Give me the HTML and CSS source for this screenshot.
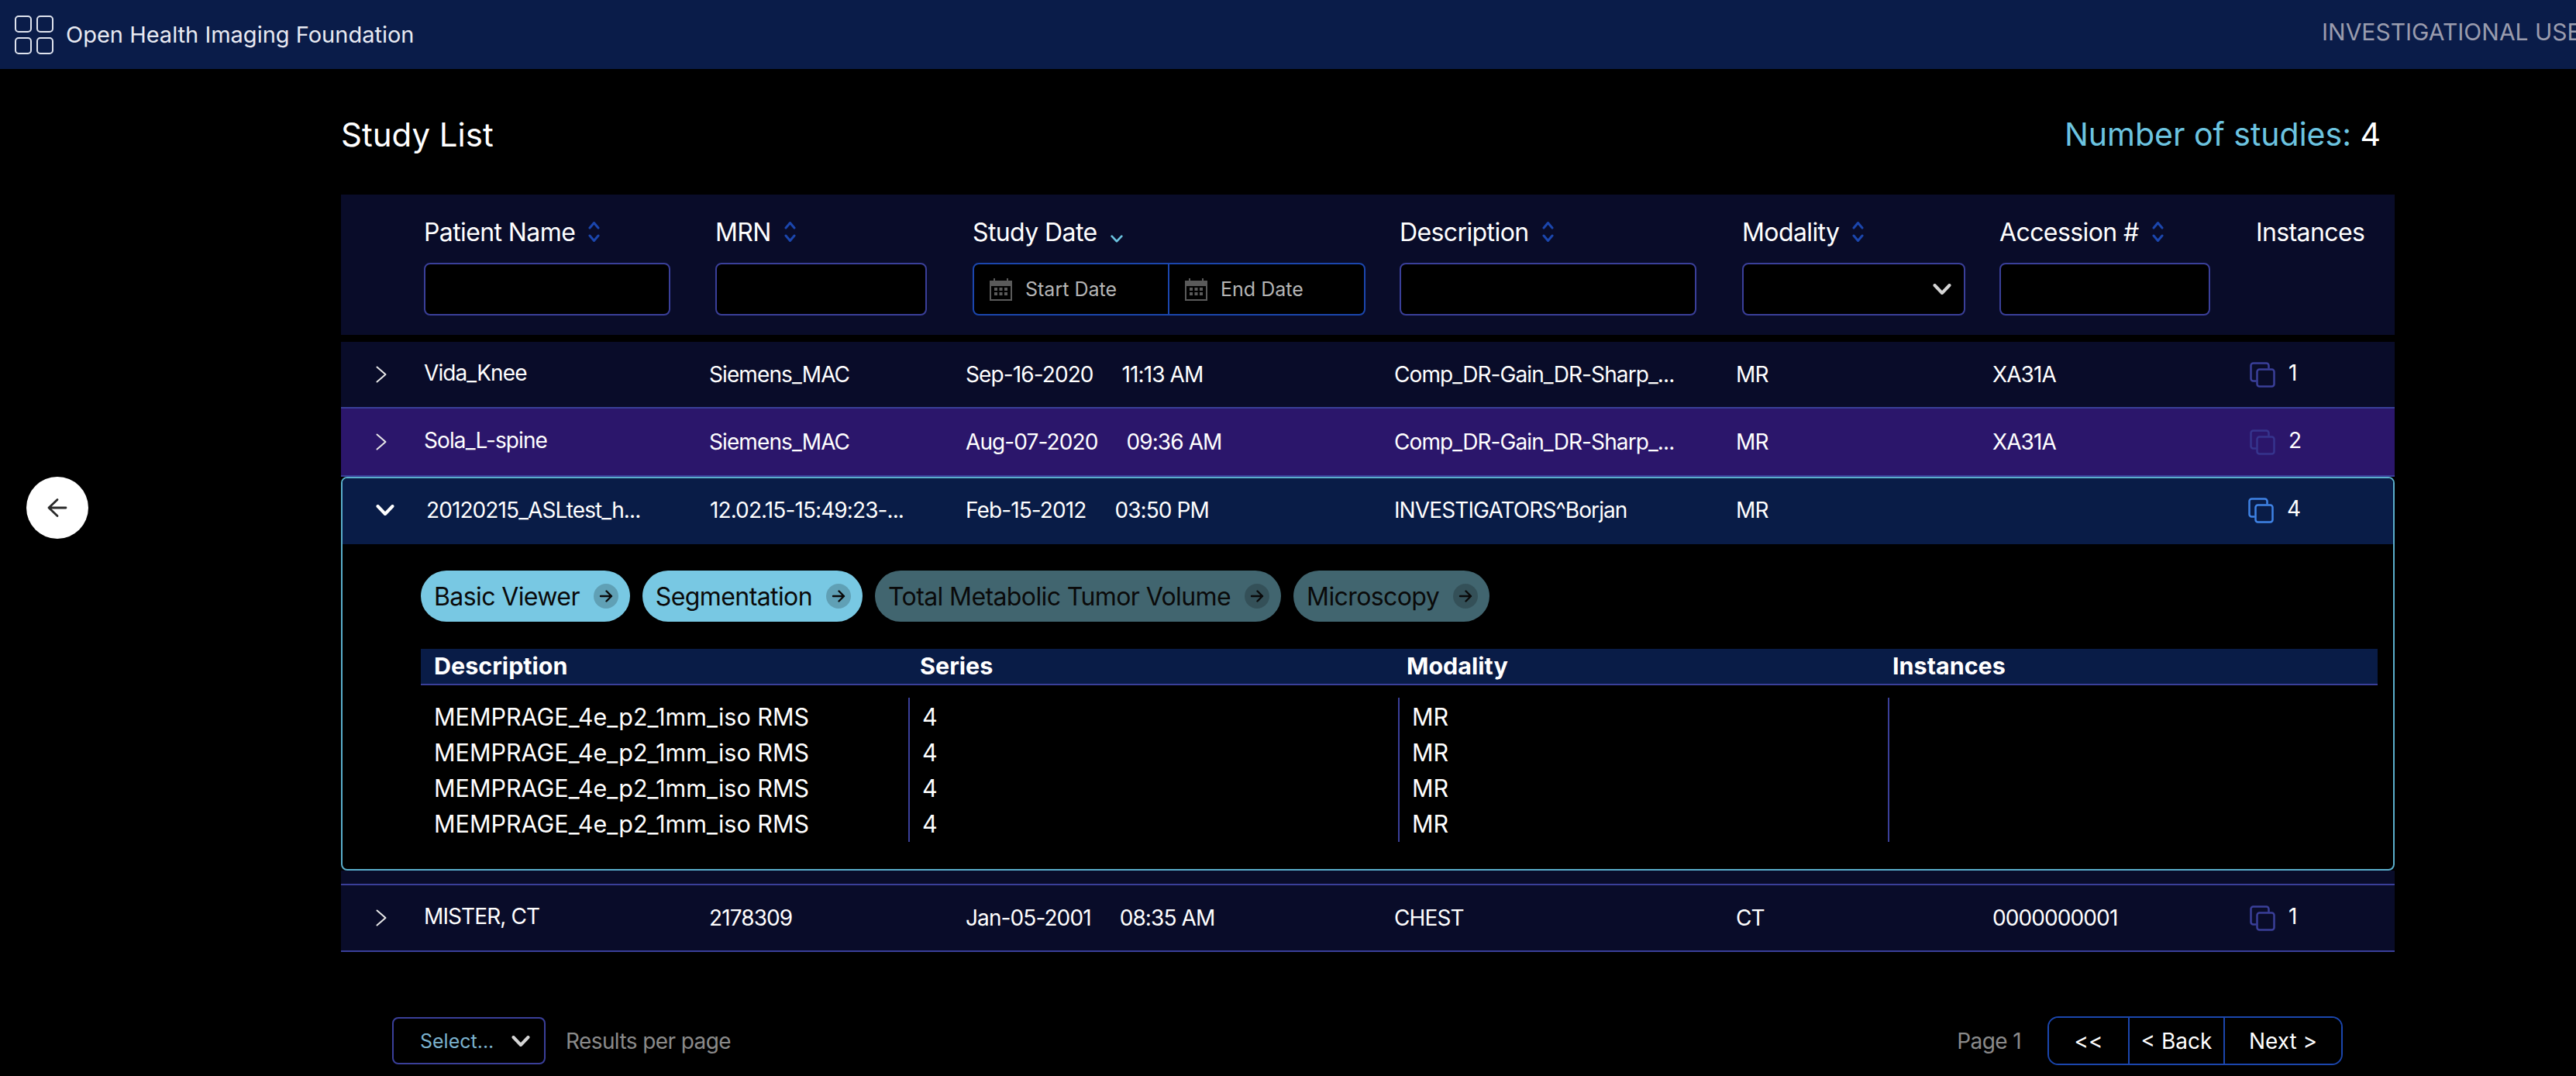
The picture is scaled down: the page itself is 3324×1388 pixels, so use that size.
FILE: index.html
```html
<!DOCTYPE html>
<html lang="en">
<head>
  <meta charset="UTF-8" />
  <title>Study List</title>
  <link rel="stylesheet" href="styles.css">
</head>
<body>
  <svg width="0" height="0" class="defs">
    <defs>
      <symbol id="sort" viewBox="0 0 15 28"><path d="M2 9l5.500-6.500L13 9M2 19l5.500 6.500L13 19" fill="none" stroke="currentColor" stroke-width="3" stroke-linecap="round" stroke-linejoin="round"/></symbol>
      <symbol id="copies" viewBox="0 0 33 33"><path d="M8.500 24.500h-4a3 3 0 0 1-3-3v-17a3 3 0 0 1 3-3h17a3 3 0 0 1 3 3v4" fill="none" stroke="currentColor" stroke-width="2.500"/><rect x="9.500" y="9.500" width="22" height="22" rx="3" fill="none" stroke="currentColor" stroke-width="2.500"/></symbol>
      <symbol id="cal" viewBox="0 0 29 29"><path d="M0 3h5V0h2v3h15V0h2v3h5v26H0z M2 10v17h25V10z" fill="currentColor" fill-rule="evenodd"/><path d="M6 12h4v4H6zM12.500 12h4v4h-4zM19 12h4v4h-4zM6 18h4v4H6zM12.500 18h4v4h-4zM19 18h4v4h-4z" fill="currentColor"/></symbol>
      <symbol id="down" viewBox="0 0 24 14"><path d="M2.500 2L12 12l9.500-10" fill="none" stroke="currentColor" stroke-width="4" stroke-linecap="round" stroke-linejoin="round"/></symbol>
      <symbol id="right" viewBox="0 0 14 22"><path d="M1.500 1.500L12.500 11 1.500 20.500" fill="none" stroke="currentColor" stroke-width="2" stroke-linecap="round" stroke-linejoin="round"/></symbol>
      <symbol id="arrow" viewBox="0 0 28 28"><path d="M3 14h22M14 3.500L3 14l11 10.500" fill="none" stroke="currentColor" stroke-width="2.800" stroke-linecap="round" stroke-linejoin="round"/></symbol>
      <symbol id="go" viewBox="0 0 20 20"><path d="M3 10h14M10.500 3.500L17 10l-6.500 6.500" fill="none" stroke="currentColor" stroke-width="2.400" stroke-linecap="round" stroke-linejoin="round"/></symbol>
    </defs>
  </svg>

  <header class="topbar">
    <div class="brand">
      <svg class="logo" viewBox="0 0 50 50"><g fill="none" stroke="#dfe3ee" stroke-width="2"><rect x="1" y="1" width="20" height="20" rx="4"/><rect x="29" y="1" width="20" height="20" rx="4"/><rect x="1" y="29" width="20" height="20" rx="4"/><rect x="29" y="29" width="20" height="20" rx="4"/></g></svg>
      <span>Open Health Imaging Foundation</span>
    </div>
    <div class="notice">INVESTIGATIONAL USE ONLY</div>
  </header>

  <button class="back-btn"><svg class="back-icon"><use href="#arrow"/></svg></button>

  <main class="content">
    <div class="title-row">
      <h1>Study List</h1>
      <div class="count"><span class="count-label">Number of studies:</span> 4</div>
    </div>

    <div class="filters">
      <div class="filter">
        <div class="filter-label">Patient Name <svg class="sort"><use href="#sort"/></svg></div>
        <div class="field w-patient"></div>
      </div>
      <div class="filter">
        <div class="filter-label">MRN <svg class="sort"><use href="#sort"/></svg></div>
        <div class="field w-mrn"></div>
      </div>
      <div class="filter">
        <div class="filter-label">Study Date <svg class="sort-active"><use href="#down"/></svg></div>
        <div class="field date-range">
          <div class="date-part start"><svg class="cal"><use href="#cal"/></svg>Start Date</div>
          <div class="date-part"><svg class="cal"><use href="#cal"/></svg>End Date</div>
        </div>
      </div>
      <div class="filter">
        <div class="filter-label">Description <svg class="sort"><use href="#sort"/></svg></div>
        <div class="field w-desc"></div>
      </div>
      <div class="filter">
        <div class="filter-label">Modality <svg class="sort"><use href="#sort"/></svg></div>
        <div class="field w-modality select-field"><svg class="select-arrow"><use href="#down"/></svg></div>
      </div>
      <div class="filter">
        <div class="filter-label">Accession # <svg class="sort"><use href="#sort"/></svg></div>
        <div class="field w-accession"></div>
      </div>
      <div class="filter">
        <div class="filter-label">Instances</div>
      </div>
    </div>

    <div class="study-row">
      <svg class="row-arrow"><use href="#right"/></svg>
      <div class="raised">Vida_Knee</div>
      <div>Siemens_MAC</div>
      <div><span class="date">Sep-16-2020</span>11:13 AM</div>
      <div>Comp_DR-Gain_DR-Sharp_...</div>
      <div>MR</div>
      <div>XA31A</div>
      <div class="instances raised"><svg class="copies"><use href="#copies"/></svg>1</div>
    </div>

    <div class="study-row hovered">
      <svg class="row-arrow"><use href="#right"/></svg>
      <div class="raised">Sola_L-spine</div>
      <div>Siemens_MAC</div>
      <div><span class="date">Aug-07-2020</span>09:36 AM</div>
      <div>Comp_DR-Gain_DR-Sharp_...</div>
      <div>MR</div>
      <div>XA31A</div>
      <div class="instances raised"><svg class="copies"><use href="#copies"/></svg>2</div>
    </div>

    <div class="study-open">
      <div class="study-row open-head">
        <svg class="row-arrow-open"><use href="#down"/></svg>
        <div>20120215_ASLtest_h...</div>
        <div>12.02.15-15:49:23-...</div>
        <div><span class="date">Feb-15-2012</span>03:50 PM</div>
        <div>INVESTIGATORS^Borjan</div>
        <div>MR</div>
        <div></div>
        <div class="instances raised"><svg class="copies"><use href="#copies"/></svg>4</div>
      </div>

      <div class="modes">
        <button class="mode">Basic Viewer <span class="mode-go"><svg><use href="#go"/></svg></span></button>
        <button class="mode">Segmentation <span class="mode-go"><svg><use href="#go"/></svg></span></button>
        <button class="mode off">Total Metabolic Tumor Volume <span class="mode-go"><svg><use href="#go"/></svg></span></button>
        <button class="mode off">Microscopy <span class="mode-go"><svg><use href="#go"/></svg></span></button>
      </div>

      <div class="series">
        <div class="series-head">
          <div>Description</div>
          <div>Series</div>
          <div>Modality</div>
          <div>Instances</div>
        </div>
        <div class="series-body">
          <div class="series-col">
            <div>MEMPRAGE_4e_p2_1mm_iso RMS</div>
            <div>MEMPRAGE_4e_p2_1mm_iso RMS</div>
            <div>MEMPRAGE_4e_p2_1mm_iso RMS</div>
            <div>MEMPRAGE_4e_p2_1mm_iso RMS</div>
          </div>
          <div class="series-col ruled">
            <div>4</div>
            <div>4</div>
            <div>4</div>
            <div>4</div>
          </div>
          <div class="series-col ruled">
            <div>MR</div>
            <div>MR</div>
            <div>MR</div>
            <div>MR</div>
          </div>
          <div class="series-col ruled"></div>
        </div>
      </div>
    </div>

    <div class="open-gap"></div>

    <div class="study-row">
      <svg class="row-arrow"><use href="#right"/></svg>
      <div class="raised">MISTER, CT</div>
      <div>2178309</div>
      <div><span class="date">Jan-05-2001</span>08:35 AM</div>
      <div>CHEST</div>
      <div>CT</div>
      <div>0000000001</div>
      <div class="instances raised"><svg class="copies"><use href="#copies"/></svg>1</div>
    </div>

    <footer class="pager">
      <div class="pager-left">
        <div class="page-size">Select... <svg class="select-arrow"><use href="#down"/></svg></div>
        <span class="muted">Results per page</span>
      </div>
      <div class="pager-right">
        <span class="muted">Page 1</span>
        <div class="page-btns">
          <button class="first">&lt;&lt;</button>
          <button class="prev">&lt; Back</button>
          <button class="next">Next &gt;</button>
        </div>
      </div>
    </footer>
  </main>
</body>
</html>
```

FILE: styles.css
```css
html, body {
  margin: 0;
  height: 100%;
  background: #000;
  color: #fff;
  font-family: Inter, "Liberation Sans", sans-serif;
  overflow: hidden;
}

.defs {
  position: absolute;
}

button {
  font-family: inherit;
  border: none;
  padding: 0;
  color: inherit;
}

.topbar {
  height: 89px;
  background: #0a1c49;
  display: flex;
  align-items: center;
  justify-content: space-between;
  white-space: nowrap;
  overflow: hidden;
}

.brand {
  display: flex;
  align-items: center;
  gap: 16px;
  padding-left: 19px;
  font-size: 29px;
  color: #e8eaf2;
}

.logo {
  width: 50px;
  height: 50px;
}

.notice {
  flex: none;
  width: 328px;
  font-size: 30px;
  color: #9a9cae;
  margin-top: -8px;
}

.back-btn {
  position: absolute;
  left: 34px;
  top: 615px;
  width: 80px;
  height: 80px;
  border-radius: 50%;
  background: #fff;
  color: #2a2a2a;
  display: flex;
  align-items: center;
  justify-content: center;
}

.back-icon {
  width: 28px;
  height: 28px;
}

.content {
  width: 2650px;
  margin-left: 440px;
}

.title-row {
  height: 162px;
  display: flex;
  align-items: center;
  justify-content: space-between;
  box-sizing: border-box;
  padding: 6px 18px 0 0;
}

h1 {
  margin: 0;
  font-size: 42px;
  font-weight: 400;
}

.count {
  font-size: 41px;
}

.count-label {
  color: #6cc4e0;
}

.filters {
  height: 181px;
  background: #090c29;
  display: grid;
  grid-template-columns: 107px 376px 332px 551px 442px 332px 331px 1fr;
  box-sizing: border-box;
  padding-top: 30px;
  margin-bottom: 9px;
}

.filter:first-child {
  grid-column: 2;
}

.filter-label {
  height: 58px;
  font-size: 32px;
  letter-spacing: -0.6px;
  display: flex;
  align-items: flex-start;
  gap: 17px;
  white-space: nowrap;
  line-height: 38px;
}

.sort {
  width: 15px;
  height: 28px;
  margin-top: 4px;
  color: #1b46ad;
}

.sort-active {
  width: 16px;
  height: 10px;
  margin-top: 22px;
  color: #6cc4e0;
}

.field {
  height: 68px;
  box-sizing: border-box;
  background: #000;
  border: 2px solid #3a3f99;
  border-radius: 8px;
}

.w-patient { width: 318px; }
.w-mrn { width: 273px; }
.w-desc { width: 383px; }
.w-modality { width: 288px; }
.w-accession { width: 272px; }

.select-field {
  display: flex;
  align-items: center;
  justify-content: flex-end;
  padding-right: 16px;
}

.select-arrow {
  width: 24px;
  height: 14px;
  color: #d4d4d4;
}

.date-range {
  width: 507px;
  border-color: #1b46ad;
  display: flex;
}

.date-part {
  flex: 1;
  display: flex;
  align-items: center;
  gap: 17px;
  padding-left: 20px;
  font-size: 25px;
  color: #b5b5b5;
}

.date-part.start {
  flex: none;
  width: 252px;
  box-sizing: border-box;
  border-right: 2px solid #1b46ad;
}

.cal {
  width: 29px;
  height: 29px;
  color: #5a5a5a;
}

.study-row {
  height: 86px;
  box-sizing: border-box;
  background: #090c29;
  border-bottom: 2px solid #3a3f99;
  display: grid;
  grid-template-columns: 107px 368px 331px 553px 441px 331px 332px 1fr;
  align-items: center;
  font-size: 28px;
  letter-spacing: -0.9px;
  white-space: nowrap;
}

.study-row.hovered {
  height: 88px;
  background: #2b166b;
}

.study-row.hovered .copies {
  color: #3a3f99;
  opacity: 0.75;
}

.row-arrow {
  width: 14px;
  height: 22px;
  margin-left: 45px;
  color: #e8e8e8;
}

.row-arrow-open {
  width: 24px;
  height: 14px;
  margin-left: 43px;
  color: #fff;
}

.date {
  margin-right: 37px;
}

.raised {
  margin-top: -4px;
}

.instances {
  display: flex;
  align-items: center;
  gap: 17px;
}

.copies {
  width: 33px;
  height: 33px;
  margin-top: 4px;
  color: #3a3f99;
}

.study-open {
  height: 508px;
  box-sizing: border-box;
  border: 2px solid #5aaecb;
  border-radius: 8px;
}

.open-head {
  height: 85px;
  padding-bottom: 3px;
  background: #091c47;
  border-bottom: none;
  border-radius: 6px 6px 0 0;
  grid-template-columns: 108px 366px 330px 553px 441px 331px 332px 1fr;
}

.open-head .instances {
  margin-left: -2px;
}

.open-head .copies {
  color: #3f83e6;
}

.modes {
  display: flex;
  gap: 16px;
  padding: 34px 0 35px 101px;
}

.mode {
  height: 66px;
  padding: 0 15px 0 17px;
  border-radius: 33px;
  background: #78c8e3;
  color: #0a0a0a;
  font-size: 32px;
  letter-spacing: -0.6px;
  display: flex;
  align-items: center;
  gap: 18px;
}

.mode.off {
  background: #41656f;
}

.mode-go {
  width: 32px;
  height: 32px;
  border-radius: 50%;
  background: rgba(0, 0, 0, 0.2);
  display: flex;
  align-items: center;
  justify-content: center;
}

.mode-go svg {
  width: 20px;
  height: 20px;
}

.series {
  margin: 0 20px 0 101px;
}

.series-head {
  height: 47px;
  box-sizing: border-box;
  background: #091c47;
  border-bottom: 2px solid #3a3f99;
  display: grid;
  grid-template-columns: 627px 628px 627px 1fr;
  align-items: center;
  padding: 0 0 2px 17px;
  font-size: 30.500px;
  font-weight: 700;
}

.series-body {
  display: grid;
  grid-template-columns: 629px 632px 632px 1fr;
  margin-top: 16px;
  height: 184px;
}

.series-col {
  box-sizing: border-box;
  padding: 2px 0 0 17px;
  font-size: 30.500px;
  line-height: 46px;
  white-space: nowrap;
}

.series-col.ruled {
  border-left: 2px solid #3a3f99;
  padding-left: 16px;
}

.open-gap {
  height: 19px;
  box-sizing: border-box;
  background: #090c29;
  border-bottom: 2px solid #3a3f99;
}

.pager {
  display: flex;
  justify-content: space-between;
  align-items: center;
  padding: 83px 67px 0 66px;
}

.pager-left, .pager-right {
  display: flex;
  align-items: center;
}

.pager-left {
  gap: 26px;
}

.pager-right {
  gap: 34px;
}

.page-size {
  width: 198px;
  height: 61px;
  box-sizing: border-box;
  border: 2px solid #3a3f99;
  border-radius: 8px;
  display: flex;
  align-items: center;
  justify-content: space-between;
  padding: 0 18px 0 34px;
  font-size: 25px;
  color: #7bb2ce;
}

.muted {
  font-size: 28px;
  letter-spacing: -0.6px;
  color: #8a8a8a;
}

.page-btns {
  height: 63px;
  box-sizing: border-box;
  border: 2px solid #1b46ad;
  border-radius: 14px;
  display: flex;
  overflow: hidden;
}

.page-btns button {
  background: #000;
  font-size: 28px;
  border-left: 2px solid #1b46ad;
}

.page-btns .first {
  width: 102px;
  border-left: none;
}

.page-btns .prev {
  width: 123px;
}

.page-btns .next {
  flex: none;
  width: 152px;
}
```
